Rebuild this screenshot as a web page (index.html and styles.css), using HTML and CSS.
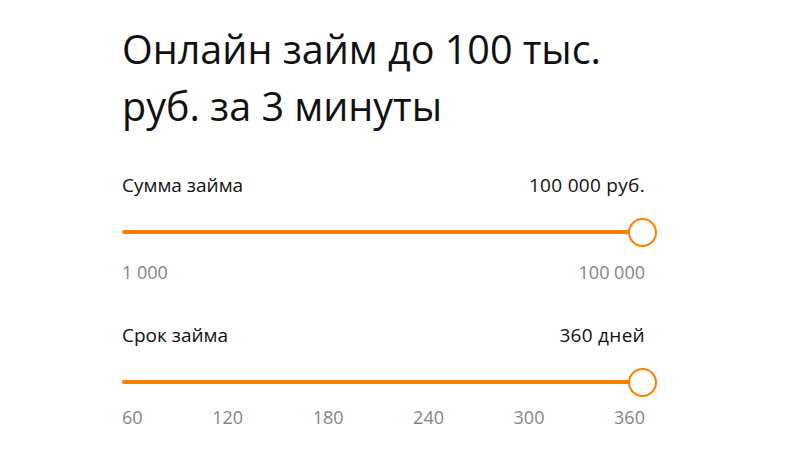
FILE: index.html
```html
<!DOCTYPE html>
<html lang="ru">
<head>
<meta charset="utf-8">
<link rel="stylesheet" href="styles.css">
</head>
<body>
<main class="calc">
  <h1 class="title">Онлайн займ до 100 тыс. руб.&nbsp;за 3 минуты</h1>

  <section class="field field-sum">
    <div class="field-head">
      <span class="field-label">Сумма займа</span>
      <span class="field-value">100 000 руб.</span>
    </div>
    <div class="slider">
      <div class="track"></div>
      <div class="thumb"></div>
    </div>
    <div class="scale">
      <span>1 000</span>
      <span>100 000</span>
    </div>
  </section>

  <section class="field field-term">
    <div class="field-head">
      <span class="field-label">Срок займа</span>
      <span class="field-value">360 дней</span>
    </div>
    <div class="slider">
      <div class="track"></div>
      <div class="thumb"></div>
    </div>
    <div class="scale">
      <span>60</span>
      <span>120</span>
      <span>180</span>
      <span>240</span>
      <span>300</span>
      <span>360</span>
    </div>
  </section>
</main>
</body>
</html>
```

FILE: styles.css
```css
html, body {
  margin: 0;
  padding: 0;
  background: #ffffff;
}

body {
  font-family: "Open Sans", "Noto Sans", sans-serif;
  color: #111111;
}

.calc {
  width: 523px;
  padding: 21px 0 0 122px;
}

.title {
  margin: 0;
  font-size: 39.5px;
  font-weight: 400;
  line-height: 57px;
  width: 520px;
}

.field-sum {
  margin-top: 38px;
}

.field-term {
  margin-top: 40px;
}

.field-head {
  display: flex;
  justify-content: space-between;
  font-size: 19px;
  line-height: 24px;
}

.field-value {
  letter-spacing: 0.3px;
}

.slider {
  position: relative;
  height: 30px;
  margin-top: 20px;
  display: flex;
  align-items: center;
}

.track {
  height: 4px;
  width: 100%;
  background: #ff7f00;
  border-radius: 2px;
}

.thumb {
  position: absolute;
  right: -12px;
  top: 1px;
  width: 25px;
  height: 25px;
  border: 2px solid #ff7f00;
  border-radius: 50%;
  background: #ffffff;
}

.scale {
  display: flex;
  justify-content: space-between;
  margin-top: 14px;
  font-size: 18px;
  line-height: 22px;
  color: #858585;
}

.field-term .scale {
  margin-top: 9px;
}
```
